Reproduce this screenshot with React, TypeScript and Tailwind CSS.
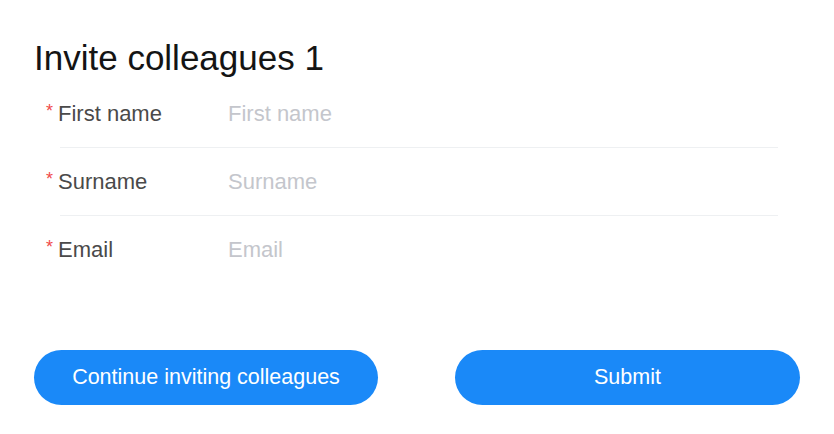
import React from 'react';

const fields = [
  { label: 'First name', placeholder: 'First name' },
  { label: 'Surname', placeholder: 'Surname' },
  { label: 'Email', placeholder: 'Email' },
];

const App: React.FC = () => {
  return (
    <div className="min-h-screen w-[834px] bg-white font-['Liberation_Sans',Arial,sans-serif]">
      <div className="pl-[34px] pr-[34px] pt-[38px]">
        <h1 className="text-[35px] leading-[40px] text-[#141414]">Invite colleagues 1</h1>

        {/* Form rows */}
        <div className="mt-[2px]">
          {fields.map((f, i) => (
            <div key={f.label} className="ml-[26px] mr-[22px]">
              <div className="flex items-center h-[67px] -ml-[14px]">
                <div className="w-[182px] flex items-center text-[22px] text-[#4a4a4a]">
                  <span className="text-[#f04a4a] text-[18px] mr-[5px] -mt-[4px]">*</span>
                  <span>{f.label}</span>
                </div>
                <input
                  type="text"
                  placeholder={f.placeholder}
                  className="flex-1 bg-transparent outline-none text-[22px] text-[#333] placeholder:text-[#c4c6cc]"
                />
              </div>
              {i < fields.length - 1 && <div className="h-px bg-[#eef0f2]" />}
            </div>
          ))}
        </div>

        {/* Actions */}
        <div className="flex justify-between mt-[67px]">
          <button className="w-[344px] h-[55px] rounded-full bg-[#1a89f8] text-white text-[21.5px]">
            Continue inviting colleagues
          </button>
          <button className="w-[345px] h-[55px] rounded-full bg-[#1a89f8] text-white text-[21.5px]">
            Submit
          </button>
        </div>
      </div>
    </div>
  );
};

export default App;
